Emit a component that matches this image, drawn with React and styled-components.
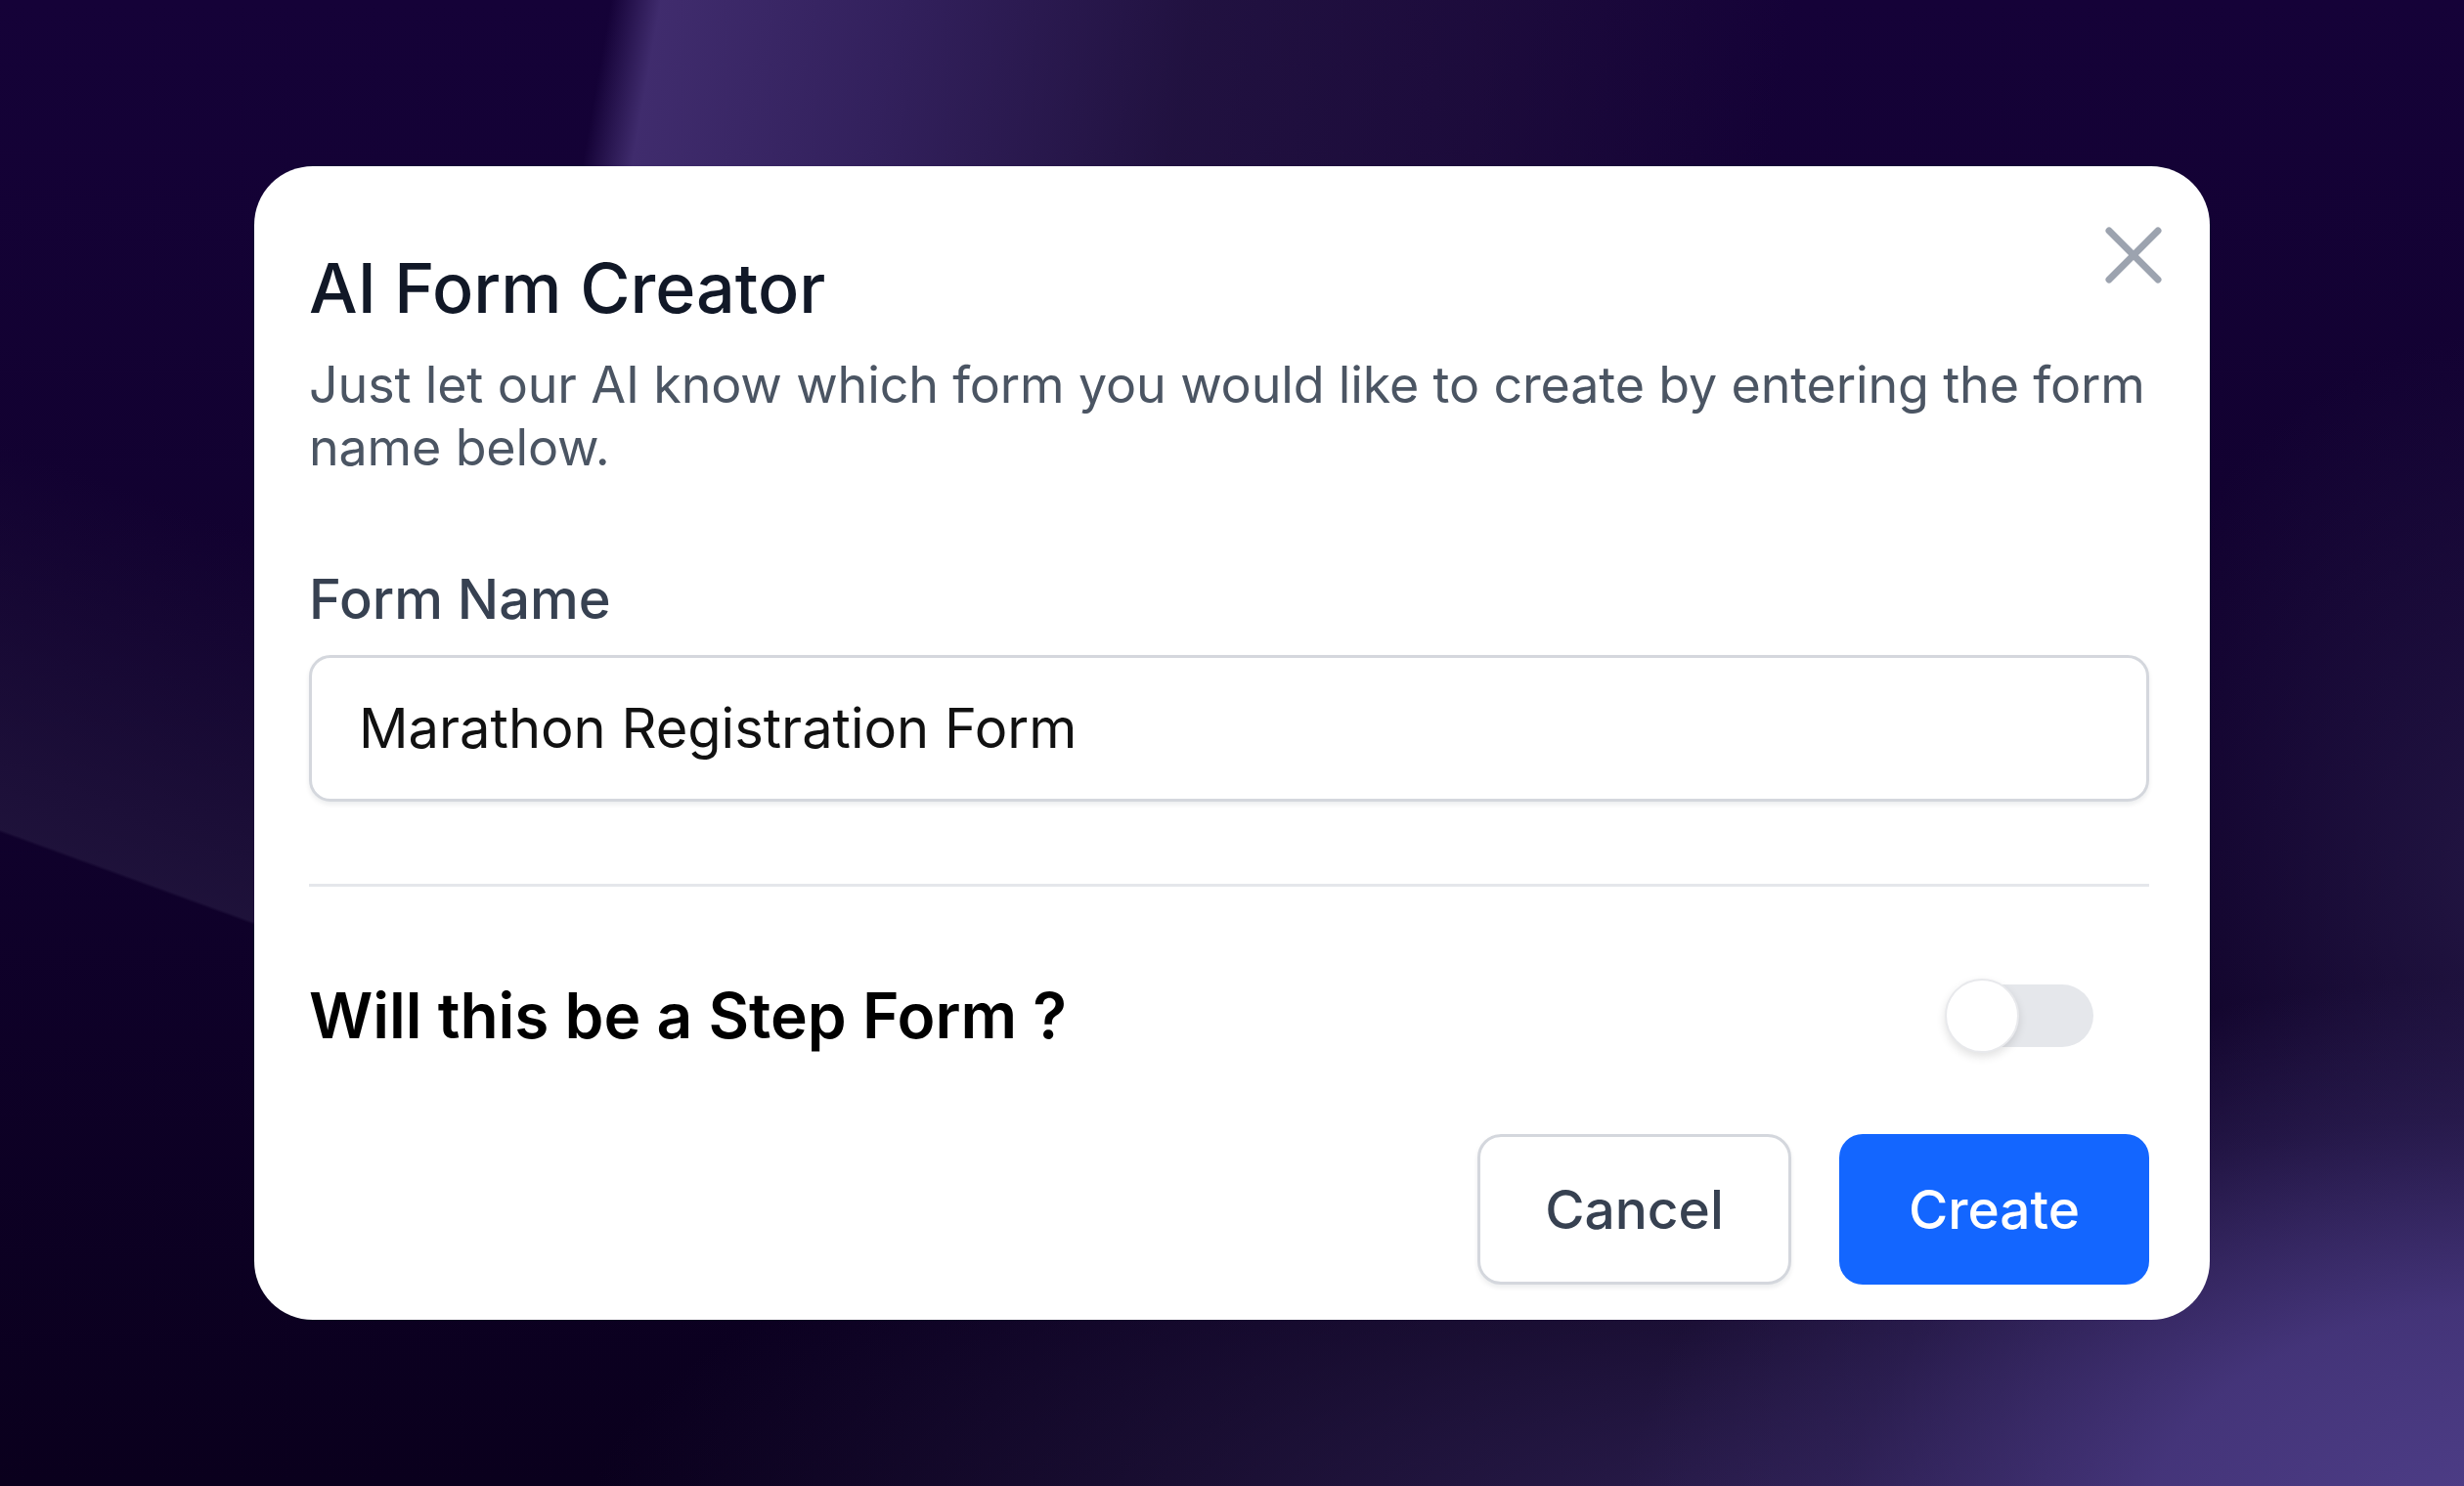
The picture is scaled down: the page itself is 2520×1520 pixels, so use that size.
import React, { useState } from "react";
import styled, { createGlobalStyle } from "styled-components";

const Global = createGlobalStyle`
  html, body { margin: 0; padding: 0; }
  body { font-family: Inter, "Noto Sans", sans-serif; }
  * { box-sizing: border-box; }
`;

const Backdrop = styled.div`
  width: 2520px;
  height: 1520px;
  display: flex;
  align-items: center;
  justify-content: center;
  overflow: hidden;
  background-color: #10012b;
  background-image:
    linear-gradient(100deg, rgba(60, 40, 104, 0) 24.5%, rgba(66, 46, 112, 0.95) 26.5%, rgba(58, 40, 102, 0.8) 36%, rgba(38, 24, 68, 0.7) 48%, rgba(36, 20, 64, 0.5) 60%, rgba(30, 14, 58, 0) 72%),
    linear-gradient(200deg, rgba(36, 24, 66, 0) 34%, rgba(34, 22, 62, 0.8) 58.5%, rgba(16, 2, 40, 0) 58.7%),
    radial-gradient(ellipse 900px 560px at 2560px 1560px, #4e3e88 0%, rgba(72, 56, 128, 0.9) 40%, rgba(52, 38, 96, 0.5) 75%, rgba(40, 28, 70, 0) 100%),
    radial-gradient(ellipse 1300px 420px at 1900px 1560px, rgba(48, 34, 86, 0.9) 0%, rgba(40, 28, 70, 0.5) 55%, rgba(40, 28, 70, 0) 100%),
    radial-gradient(ellipse 420px 560px at 2560px 900px, rgba(40, 28, 74, 0.75) 0%, rgba(40, 28, 74, 0) 100%),
    linear-gradient(180deg, #150238 0%, #10012c 55%, #0a001d 100%);
  background-size: 100% 180px, 270px 100%, 100% 100%, 100% 100%, 100% 100%, 100% 100%;
  background-repeat: no-repeat;
`;

const Card = styled.div`
  position: relative;
  width: 2000px;
  height: 1180px;
  background: #ffffff;
  border-radius: 60px;
  padding: 85px 62px 36px 56px;
  display: flex;
  flex-direction: column;
`;

const CloseButton = styled.button`
  position: absolute;
  right: 48px;
  top: 62px;
  width: 60px;
  height: 58px;
  padding: 0;
  border: none;
  background: transparent;
  display: flex;
  align-items: center;
  justify-content: center;
  cursor: pointer;
`;

const Title = styled.h2`
  margin: 0;
  font-family: Inter, sans-serif;
  font-size: 70px;
  line-height: 80px;
  font-weight: 500;
  color: #111827;
`;

const Subtitle = styled.p`
  margin: 27px 0 0;
  font-family: Inter, sans-serif;
  font-size: 52px;
  line-height: 64px;
  font-weight: 400;
  letter-spacing: -0.15px;
  color: #4b5563;
`;

const Label = styled.label`
  margin-top: 91px;
  font-family: Inter, sans-serif;
  font-size: 56px;
  line-height: 64px;
  font-weight: 500;
  color: #374151;
`;

const TextInput = styled.input`
  margin-top: 25px;
  width: 100%;
  height: 150px;
  border: 3px solid #d4d7dd;
  border-radius: 22px;
  padding: 0 48px;
  font-family: Inter, sans-serif;
  font-size: 56px;
  color: #111111;
  background: #ffffff;
  box-shadow: 0 3px 5px rgba(17, 24, 39, 0.08);
  outline: none;
`;

const Divider = styled.hr`
  margin: 84px 0 0;
  border: none;
  height: 3px;
  background: #e5e7eb;
`;

const StepRow = styled.div`
  margin-top: 94px;
  height: 76px;
  display: flex;
  align-items: center;
  justify-content: space-between;
`;

const StepText = styled.span`
  font-family: Inter, sans-serif;
  font-size: 64px;
  line-height: 76px;
  font-weight: 600;
  color: #000000;
`;

const Toggle = styled.button`
  position: relative;
  width: 146px;
  height: 64px;
  margin-right: 57px;
  padding: 0;
  border: none;
  border-radius: 32px;
  background: ${(p) => (p.$on ? "#1366ff" : "#e5e7eb")};
  cursor: pointer;
`;

const Knob = styled.span`
  position: absolute;
  top: -6px;
  left: ${(p) => (p.$on ? "76px" : "-6px")};
  width: 76px;
  height: 76px;
  border-radius: 50%;
  background: #ffffff;
  border: 2px solid #e8e9ec;
  box-shadow: 0 4px 10px rgba(0, 0, 0, 0.12);
`;

const Actions = styled.div`
  margin-top: 83px;
  display: flex;
  justify-content: flex-end;
  gap: 49px;
`;

const Button = styled.button`
  height: 154px;
  width: ${(p) => p.$w}px;
  border-radius: 24px;
  font-family: Inter, sans-serif;
  font-size: 55px;
  font-weight: 500;
  cursor: pointer;
  border: ${(p) => (p.$primary ? "none" : "3px solid #d4d7dd")};
  background: ${(p) => (p.$primary ? "#1366ff" : "#ffffff")};
  color: ${(p) => (p.$primary ? "#ffffff" : "#374151")};
  box-shadow: ${(p) => (p.$primary ? "none" : "0 3px 5px rgba(17, 24, 39, 0.08)")};
`;

export default function App() {
  const [on, setOn] = useState(false);
  return (
    <>
      <Global />
      <Backdrop>
        <Card>
          <CloseButton aria-label="Close">
            <svg width="60" height="58" viewBox="0 0 60 58">
              <path d="M5 4 L55 54 M55 4 L5 54" stroke="#9ca3af" strokeWidth="7" strokeLinecap="round" fill="none" />
            </svg>
          </CloseButton>
          <Title>AI Form Creator</Title>
          <Subtitle>
            Just let our AI know which form you would like to create by entering the form name below.
          </Subtitle>
          <Label htmlFor="form-name">Form Name</Label>
          <TextInput id="form-name" defaultValue="Marathon Registration Form" />
          <Divider />
          <StepRow>
            <StepText>Will this be a Step Form ?</StepText>
            <Toggle $on={on} onClick={() => setOn(!on)} aria-label="Step form">
              <Knob $on={on} />
            </Toggle>
          </StepRow>
          <Actions>
            <Button $w={321}>Cancel</Button>
            <Button $primary $w={317}>Create</Button>
          </Actions>
        </Card>
      </Backdrop>
    </>
  );
}
